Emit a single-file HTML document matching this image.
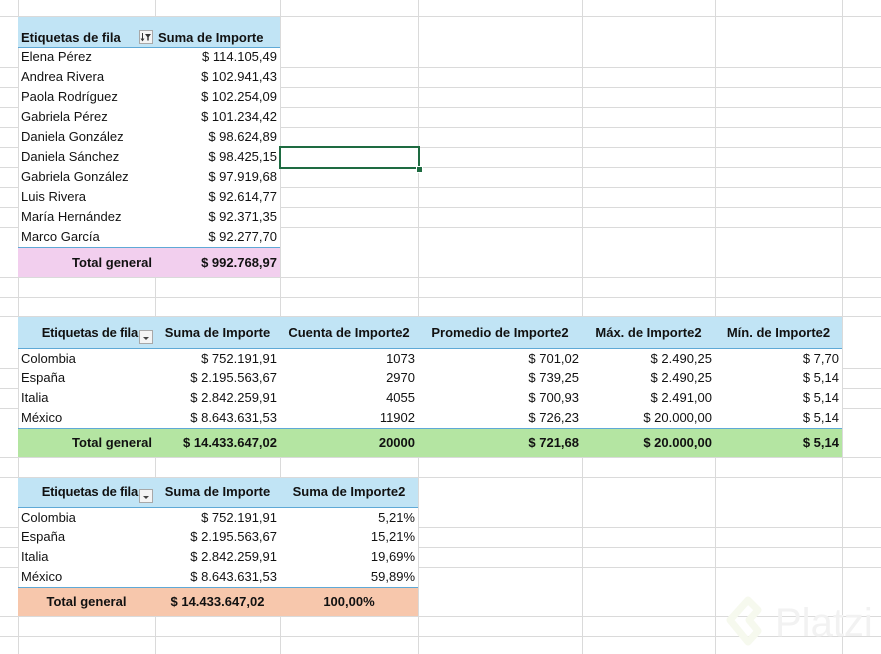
<!DOCTYPE html>
<html><head><meta charset="utf-8"><style>
body{margin:0;width:881px;height:654px;background:#fff;position:relative;overflow:hidden;font-family:"Liberation Sans",Arial,sans-serif;color:#111}
.h{position:absolute;left:0;width:881px;height:1px;background:#dadada}
.v{position:absolute;top:0;height:654px;width:1px;background:#dadada}
.bg{position:absolute}
.c{position:absolute;white-space:nowrap;font-size:13px;line-height:20px;height:20px;overflow:visible}
.b{font-weight:bold}
.l{text-align:left;padding-left:3px;box-sizing:border-box}
.r{text-align:right;padding-right:3px;box-sizing:border-box}
.m{text-align:center}
.dd{position:absolute;width:14px;height:14px;border:1px solid #a8a8a8;background:#f4f4f4;box-sizing:border-box}
</style></head><body>
<!-- grid -->
<div class="h" style="top:16px"></div><div class="h" style="top:67px"></div><div class="h" style="top:87px"></div><div class="h" style="top:107px"></div><div class="h" style="top:127px"></div><div class="h" style="top:147px"></div><div class="h" style="top:167px"></div><div class="h" style="top:187px"></div><div class="h" style="top:207px"></div><div class="h" style="top:227px"></div><div class="h" style="top:277px"></div><div class="h" style="top:297px"></div><div class="h" style="top:316px"></div><div class="h" style="top:368px"></div><div class="h" style="top:388px"></div><div class="h" style="top:408px"></div><div class="h" style="top:457px"></div><div class="h" style="top:477px"></div><div class="h" style="top:527px"></div><div class="h" style="top:547px"></div><div class="h" style="top:567px"></div><div class="h" style="top:616px"></div><div class="h" style="top:636px"></div>
<div class="v" style="left:18px"></div><div class="v" style="left:155px"></div><div class="v" style="left:280px"></div><div class="v" style="left:418px"></div><div class="v" style="left:582px"></div><div class="v" style="left:715px"></div><div class="v" style="left:842px"></div>
<!-- white body covers -->
<div class="bg" style="left:19px;top:48px;width:261px;height:199px;background:#fff"></div>
<div class="bg" style="left:19px;top:349px;width:823px;height:79px;background:#fff"></div>
<div class="bg" style="left:19px;top:508px;width:399px;height:79px;background:#fff"></div>
<!-- fills -->
<div class="bg" style="left:18px;top:17px;width:262px;height:30px;background:#c1e4f5"></div>
<div class="bg" style="left:18px;top:248px;width:262px;height:29px;background:#f2cfee"></div>
<div class="bg" style="left:18px;top:317px;width:824px;height:32px;background:#c1e4f5"></div>
<div class="bg" style="left:18px;top:429px;width:824px;height:28px;background:#b4e5a2"></div>
<div class="bg" style="left:18px;top:478px;width:400px;height:29px;background:#c1e4f5"></div>
<div class="bg" style="left:18px;top:588px;width:400px;height:28px;background:#f7c7ac"></div>
<!-- header bottom borders -->
<div class="bg" style="left:18px;top:47px;width:262px;height:1px;background:#5fa9d6"></div>
<div class="bg" style="left:18px;top:247px;width:262px;height:1px;background:#5fa9d6"></div>
<div class="bg" style="left:18px;top:348px;width:824px;height:1px;background:#5fa9d6"></div>
<div class="bg" style="left:18px;top:428px;width:824px;height:1px;background:#5fa9d6"></div>
<div class="bg" style="left:18px;top:507px;width:400px;height:1px;background:#5fa9d6"></div>
<div class="bg" style="left:18px;top:587px;width:400px;height:1px;background:#5fa9d6"></div>

<!-- Table 1 -->
<div class="c b l" style="left:18px;top:28px;width:137px">Etiquetas de fila</div>
<div class="dd" style="left:139px;top:30px"><svg width="12" height="12" viewBox="0 0 12 12" style="position:absolute;left:0;top:0"><path d="M2.5 2v7M1 7.5l1.5 2 1.5-2" stroke="#333" fill="none" stroke-width="1"/><path d="M5 3h6l-2.3 3v3.5h-1.4V6z" fill="#333"/></svg></div>
<div class="c b l" style="left:155px;top:28px;width:125px">Suma de Importe</div>
<div class="c l" style="left:18px;top:47px;width:137px">Elena Pérez</div><div class="c r" style="left:155px;top:47px;width:125px">$ 114.105,49</div>
<div class="c l" style="left:18px;top:67px;width:137px">Andrea Rivera</div><div class="c r" style="left:155px;top:67px;width:125px">$ 102.941,43</div>
<div class="c l" style="left:18px;top:87px;width:137px">Paola Rodríguez</div><div class="c r" style="left:155px;top:87px;width:125px">$ 102.254,09</div>
<div class="c l" style="left:18px;top:107px;width:137px">Gabriela Pérez</div><div class="c r" style="left:155px;top:107px;width:125px">$ 101.234,42</div>
<div class="c l" style="left:18px;top:127px;width:137px">Daniela González</div><div class="c r" style="left:155px;top:127px;width:125px">$ 98.624,89</div>
<div class="c l" style="left:18px;top:147px;width:137px">Daniela Sánchez</div><div class="c r" style="left:155px;top:147px;width:125px">$ 98.425,15</div>
<div class="c l" style="left:18px;top:167px;width:137px">Gabriela González</div><div class="c r" style="left:155px;top:167px;width:125px">$ 97.919,68</div>
<div class="c l" style="left:18px;top:187px;width:137px">Luis Rivera</div><div class="c r" style="left:155px;top:187px;width:125px">$ 92.614,77</div>
<div class="c l" style="left:18px;top:207px;width:137px">María Hernández</div><div class="c r" style="left:155px;top:207px;width:125px">$ 92.371,35</div>
<div class="c l" style="left:18px;top:227px;width:137px">Marco García</div><div class="c r" style="left:155px;top:227px;width:125px">$ 92.277,70</div>
<div class="c b r" style="left:18px;top:253px;width:137px">Total general</div><div class="c b r" style="left:155px;top:253px;width:125px">$ 992.768,97</div>
<!-- selected cell -->
<div class="bg" style="left:279px;top:146px;width:141px;height:23px;border:2px solid #1e6b41;box-sizing:border-box"></div>
<div class="bg" style="left:416px;top:166px;width:5px;height:5px;background:#1e6b41;border:1px solid #fff"></div>

<!-- Table 2 -->
<div class="c b r" style="left:18px;top:323px;width:137px;padding-right:17px;letter-spacing:-0.2px">Etiquetas de fila</div>
<div class="dd" style="left:139px;top:330px"><svg width="12" height="12" viewBox="0 0 12 12" style="position:absolute;left:0;top:0"><path d="M3 6h6l-3 3z" fill="#444"/></svg></div>
<div class="c b m" style="left:155px;top:323px;width:125px">Suma de Importe</div>
<div class="c b m" style="left:280px;top:323px;width:138px">Cuenta de Importe2</div>
<div class="c b m" style="left:418px;top:323px;width:164px">Promedio de Importe2</div>
<div class="c b m" style="left:582px;top:323px;width:133px">Máx. de Importe2</div>
<div class="c b m" style="left:715px;top:323px;width:127px">Mín. de Importe2</div>

<div class="c l" style="left:18px;top:349px;width:137px">Colombia</div><div class="c r" style="left:155px;top:349px;width:125px">$ 752.191,91</div><div class="c r" style="left:280px;top:349px;width:138px">1073</div><div class="c r" style="left:418px;top:349px;width:164px">$ 701,02</div><div class="c r" style="left:582px;top:349px;width:133px">$ 2.490,25</div><div class="c r" style="left:715px;top:349px;width:127px">$ 7,70</div>
<div class="c l" style="left:18px;top:368px;width:137px">España</div><div class="c r" style="left:155px;top:368px;width:125px">$ 2.195.563,67</div><div class="c r" style="left:280px;top:368px;width:138px">2970</div><div class="c r" style="left:418px;top:368px;width:164px">$ 739,25</div><div class="c r" style="left:582px;top:368px;width:133px">$ 2.490,25</div><div class="c r" style="left:715px;top:368px;width:127px">$ 5,14</div>
<div class="c l" style="left:18px;top:388px;width:137px">Italia</div><div class="c r" style="left:155px;top:388px;width:125px">$ 2.842.259,91</div><div class="c r" style="left:280px;top:388px;width:138px">4055</div><div class="c r" style="left:418px;top:388px;width:164px">$ 700,93</div><div class="c r" style="left:582px;top:388px;width:133px">$ 2.491,00</div><div class="c r" style="left:715px;top:388px;width:127px">$ 5,14</div>
<div class="c l" style="left:18px;top:408px;width:137px">México</div><div class="c r" style="left:155px;top:408px;width:125px">$ 8.643.631,53</div><div class="c r" style="left:280px;top:408px;width:138px">11902</div><div class="c r" style="left:418px;top:408px;width:164px">$ 726,23</div><div class="c r" style="left:582px;top:408px;width:133px">$ 20.000,00</div><div class="c r" style="left:715px;top:408px;width:127px">$ 5,14</div>
<div class="c b r" style="left:18px;top:433px;width:137px">Total general</div><div class="c b r" style="left:155px;top:433px;width:125px">$ 14.433.647,02</div><div class="c b r" style="left:280px;top:433px;width:138px">20000</div><div class="c b r" style="left:418px;top:433px;width:164px">$ 721,68</div><div class="c b r" style="left:582px;top:433px;width:133px">$ 20.000,00</div><div class="c b r" style="left:715px;top:433px;width:127px">$ 5,14</div>

<!-- Table 3 -->
<div class="c b r" style="left:18px;top:482px;width:137px;padding-right:17px;letter-spacing:-0.2px">Etiquetas de fila</div>
<div class="dd" style="left:139px;top:489px"><svg width="12" height="12" viewBox="0 0 12 12" style="position:absolute;left:0;top:0"><path d="M3 6h6l-3 3z" fill="#444"/></svg></div>
<div class="c b m" style="left:155px;top:482px;width:125px">Suma de Importe</div>
<div class="c b m" style="left:280px;top:482px;width:138px">Suma de Importe2</div>
<div class="c l" style="left:18px;top:508px;width:137px">Colombia</div><div class="c r" style="left:155px;top:508px;width:125px">$ 752.191,91</div><div class="c r" style="left:280px;top:508px;width:138px">5,21%</div>
<div class="c l" style="left:18px;top:527px;width:137px">España</div><div class="c r" style="left:155px;top:527px;width:125px">$ 2.195.563,67</div><div class="c r" style="left:280px;top:527px;width:138px">15,21%</div>
<div class="c l" style="left:18px;top:547px;width:137px">Italia</div><div class="c r" style="left:155px;top:547px;width:125px">$ 2.842.259,91</div><div class="c r" style="left:280px;top:547px;width:138px">19,69%</div>
<div class="c l" style="left:18px;top:567px;width:137px">México</div><div class="c r" style="left:155px;top:567px;width:125px">$ 8.643.631,53</div><div class="c r" style="left:280px;top:567px;width:138px">59,89%</div>
<div class="c b m" style="left:18px;top:592px;width:137px">Total general</div><div class="c b m" style="left:155px;top:592px;width:125px">$ 14.433.647,02</div><div class="c b m" style="left:280px;top:592px;width:138px">100,00%</div>

<!-- watermark -->
<svg style="position:absolute;left:724px;top:596px" width="50" height="52" viewBox="0 0 50 52"><path d="M24 4L6 24l18 22 10-11-9-11 9-10z" fill="none" stroke="#f6f9ee" stroke-width="7" stroke-linejoin="round"/></svg>
<div style="position:absolute;left:775px;top:600px;font-size:40px;line-height:46px;color:#f2f2f2;font-family:'Liberation Sans',sans-serif">Platzi</div>
</body></html>
